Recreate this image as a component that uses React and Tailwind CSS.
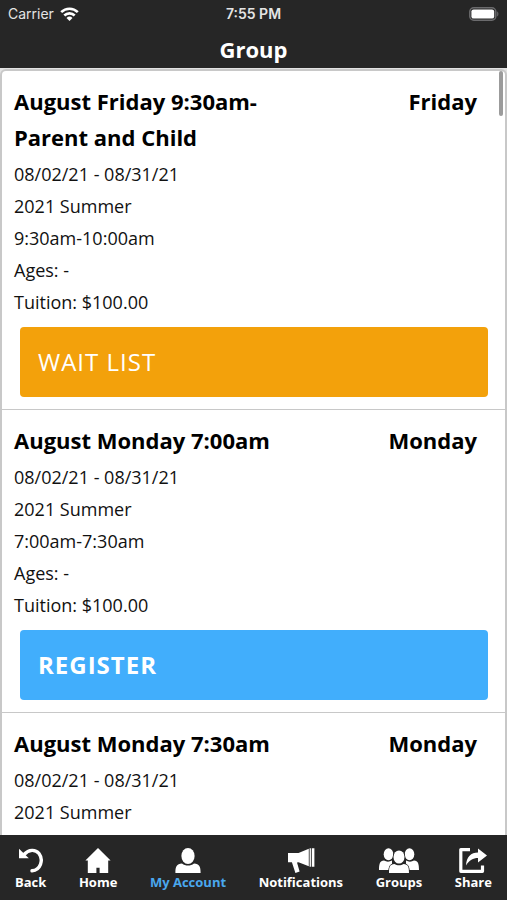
const classes = [
  {
    id: 1,
    title: 'August Friday 9:30am-Parent and Child',
    day: 'Friday',
    details: ['08/02/21 - 08/31/21', '2021 Summer', '9:30am-10:00am', 'Ages: -', 'Tuition: $100.00'],
    action: 'waitlist',
  },
  {
    id: 2,
    title: 'August Monday 7:00am',
    day: 'Monday',
    details: ['08/02/21 - 08/31/21', '2021 Summer', '7:00am-7:30am', 'Ages: -', 'Tuition: $100.00'],
    action: 'register',
  },
  {
    id: 3,
    title: 'August Monday 7:30am',
    day: 'Monday',
    details: ['08/02/21 - 08/31/21', '2021 Summer'],
  },
];

function WifiIcon() {
  return (
    <svg width="19" height="14" viewBox="0 0 19 14" fill="none" stroke="#fff" strokeWidth="2.6">
      <path d="M1.2 5.2a11.8 11.8 0 0 1 16.6 0" />
      <path d="M4.3 8.5a7.400 7.400 0 0 1 10.400 0" />
      <path d="M9.500 14 6.500 10.900a4.300 4.300 0 0 1 6 0z" fill="#fff" stroke="none" />
    </svg>
  );
}

function BatteryIcon() {
  return (
    <svg width="30" height="14" viewBox="0 0 30 14" fill="none">
      <rect x="0.8" y="0.8" width="26" height="12.400" rx="4" stroke="#6b6b6d" strokeWidth="1.500" />
      <rect x="2.400" y="2.400" width="22.800" height="9.200" rx="2.200" fill="#fff" />
      <path d="M28.200 4.600c1.600.6 1.600 4.200 0 4.800z" fill="#6b6b6d" />
    </svg>
  );
}

function BackIcon() {
  return (
    <svg width="26" height="25" viewBox="0 0 26 25" className="text-white">
      <path d="M6 6.500C11 1 17.500 1.300 21 5.500c4.800 6.500 1.500 16.500-7 17.300" fill="none" stroke="currentColor" strokeWidth="3.400" strokeLinecap="round" />
      <path d="M1 .8v9.400h9.800z" fill="currentColor" />
    </svg>
  );
}

function HomeIcon() {
  return (
    <svg width="26" height="25" viewBox="0 0 26 25" fill="#fff">
      <path d="M13 0 .4 12.400H2.800V25h8.600v-5.200h3.200V25h8.600V12.400h2.400z" />
    </svg>
  );
}

function AccountIcon() {
  return (
    <svg width="26" height="25" viewBox="0 0 26 25" fill="#fff">
      <ellipse cx="13" cy="8" rx="6.600" ry="8" />
      <path d="M.4 25c0-6.500 1.200-9.300 6.600-9.500 3.500 2.700 8.500 2.700 12 0 5.400.2 6.600 3 6.600 9.500z" />
    </svg>
  );
}

function MegaphoneIcon() {
  return (
    <svg width="28" height="25" viewBox="0 0 28 25" fill="#fff">
      <path d="M1 5h10.500L21.800.8v17.400L11.500 14.200 10 14.400l2.600 9-4.200 1.600L4.900 14.200H1z" />
      <path d="M22.600.3h1.300v18.400h-1.300zM24.800.3h2.600v18.400h-2.600z" />
    </svg>
  );
}

function GroupsIcon() {
  return (
    <svg width="40" height="25" viewBox="0 0 40 25" fill="#fff">
      <ellipse cx="9.500" cy="6.200" rx="4.800" ry="6" />
      <ellipse cx="30.500" cy="6.200" rx="4.800" ry="6" />
      <path d="M0 22c0-6 .8-9.300 5-9.500 2.500 1.500 5.500 1.500 8 0L13 22zM40 22c0-6-.8-9.300-5-9.500-2.500 1.500-5.500 1.500-8 0L27 22z" />
      <g stroke="#262626" strokeWidth="1.600" paintOrder="stroke">
        <path d="M10 25c0-6 1-8.800 5.400-9 2.700 1.800 6.500 1.800 9.200 0 4.400.2 5.400 3 5.400 9z" />
        <ellipse cx="20" cy="9" rx="5.500" ry="6.600" />
      </g>
    </svg>
  );
}

function ShareIcon() {
  return (
    <svg width="28" height="25" viewBox="0 0 28 25">
      <path d="M11 1.600H1.800V23.300H23.500V17.500" fill="none" stroke="#fff" strokeWidth="3.200" strokeLinejoin="round" />
      <path d="M7 17.500C7.500 9 12 4.600 19 4.600V.6L28 7.600l-9 6.800v-4.300c-5 0-8.500 2-12 7.400z" fill="#fff" />
    </svg>
  );
}

const tabs = [
  { label: 'Back', icon: BackIcon },
  { label: 'Home', icon: HomeIcon },
  { label: 'My Account', icon: AccountIcon, active: true },
  { label: 'Notifications', icon: MegaphoneIcon },
  { label: 'Groups', icon: GroupsIcon },
  { label: 'Share', icon: ShareIcon },
];

function ClassCard({ item }) {
  return (
    <li className="border-b border-[#c8c8c8] px-3 py-3 last:border-b-0 last:pb-0">
      <div className="flex justify-between gap-4 pr-4 text-[22px] leading-9 font-bold">
        <h2 className="max-w-[270px]">{item.title}</h2>
        <span>{item.day}</span>
      </div>
      <div className="mt-[3px] text-lg leading-8 text-[#111]">
        {item.details.map((line) => (
          <p key={line}>{line}</p>
        ))}
      </div>
      {item.action && (
        <div className="mt-[9px] pr-[5px] pl-1.5">
          {item.action === 'waitlist' ? (
            <button type="button" className="block h-[70px] w-full rounded bg-[#f3a10b] px-[18px] text-left text-2xl tracking-[1px] text-white">
              WAIT LIST
            </button>
          ) : (
            <button type="button" className="block h-[70px] w-full rounded bg-[#41aefc] px-[18px] text-left text-2xl font-bold tracking-[1px] text-white">
              REGISTER
            </button>
          )}
        </div>
      )}
    </li>
  );
}

export default function App() {
  return (
    <div className="flex h-screen flex-col bg-white font-['Open_Sans',sans-serif] text-black">
      <header className="h-[68px] shrink-0 bg-[#262626] text-white">
        <div className="grid h-7 grid-cols-3 items-center px-2 font-['Inter',sans-serif] text-sm text-[#e4e4e4]">
          <div className="flex items-center gap-1.5">
            <span>Carrier</span>
            <WifiIcon />
          </div>
          <span className="text-center font-semibold">7:55 PM</span>
          <div className="flex justify-end">
            <BatteryIcon />
          </div>
        </div>
        <h1 className="text-center text-[22px] leading-[42px] font-bold">Group</h1>
      </header>

      {/* Class list */}
      <main className="relative min-h-0 flex-1 overflow-hidden bg-[#e2e2e2] pt-px">
        <ul className="h-full overflow-y-auto rounded-t-md border-x-2 border-t-2 border-[#c8c8c8] bg-white [scrollbar-width:none]">
          {classes.map((c) => (
            <ClassCard key={c.id} item={c} />
          ))}
        </ul>
        <div className="absolute top-[3px] right-1 h-[45px] w-1 rounded-full bg-[#9b9b9b]" />
      </main>

      {/* Tab bar */}
      <nav className="flex h-[65px] shrink-0 items-start justify-between bg-[#262626] px-[15px] pt-[13px] text-white">
        {tabs.map(({ label, icon: Icon, active }) => (
          <a key={label} href="#" className="flex flex-col items-center">
            <Icon />
            <span className={active ? 'text-[13px] leading-[18px] font-bold text-[#4aa8ee]' : 'text-[13px] leading-[18px] font-bold'}>
              {label}
            </span>
          </a>
        ))}
      </nav>
    </div>
  );
}
